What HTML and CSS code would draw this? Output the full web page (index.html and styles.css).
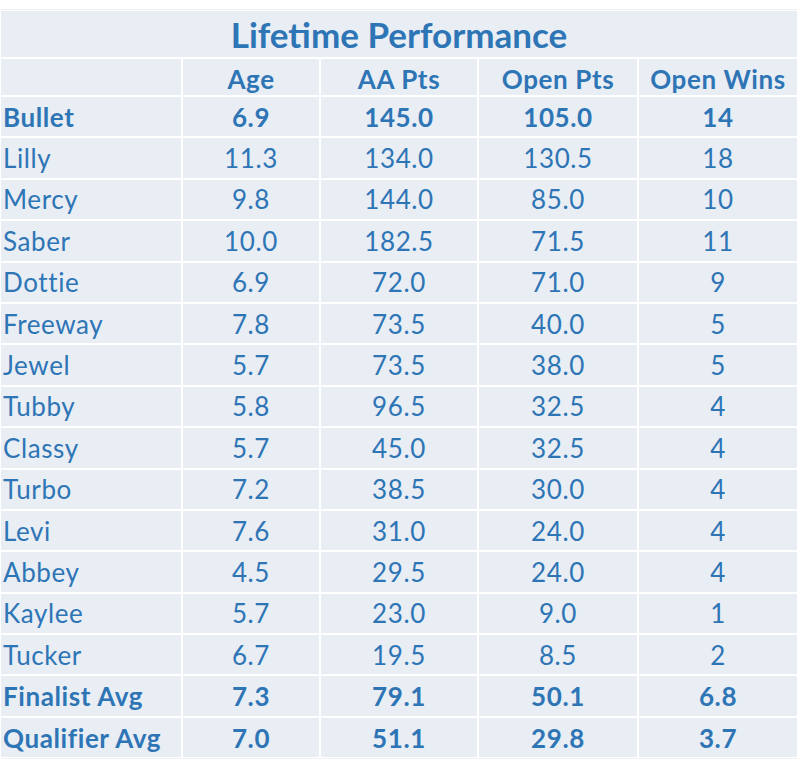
FILE: index.html
```html
<!DOCTYPE html>
<html>
<head>
<meta charset="utf-8">
<link rel="stylesheet" href="styles.css">
</head>
<body>
<div class="sheet">
  <div class="table">
    <div class="cell title">Lifetime Performance</div>
    <div class="cell head"></div>
    <div class="cell head">Age</div>
    <div class="cell head">AA Pts</div>
    <div class="cell head">Open Pts</div>
    <div class="cell head">Open Wins</div>

    <div class="cell name bold">Bullet</div><div class="cell bold">6.9</div><div class="cell bold">145.0</div><div class="cell bold">105.0</div><div class="cell bold">14</div>
    <div class="cell name">Lilly</div><div class="cell">11.3</div><div class="cell">134.0</div><div class="cell">130.5</div><div class="cell">18</div>
    <div class="cell name">Mercy</div><div class="cell">9.8</div><div class="cell">144.0</div><div class="cell">85.0</div><div class="cell">10</div>
    <div class="cell name">Saber</div><div class="cell">10.0</div><div class="cell">182.5</div><div class="cell">71.5</div><div class="cell">11</div>
    <div class="cell name">Dottie</div><div class="cell">6.9</div><div class="cell">72.0</div><div class="cell">71.0</div><div class="cell">9</div>
    <div class="cell name">Freeway</div><div class="cell">7.8</div><div class="cell">73.5</div><div class="cell">40.0</div><div class="cell">5</div>
    <div class="cell name">Jewel</div><div class="cell">5.7</div><div class="cell">73.5</div><div class="cell">38.0</div><div class="cell">5</div>
    <div class="cell name">Tubby</div><div class="cell">5.8</div><div class="cell">96.5</div><div class="cell">32.5</div><div class="cell">4</div>
    <div class="cell name">Classy</div><div class="cell">5.7</div><div class="cell">45.0</div><div class="cell">32.5</div><div class="cell">4</div>
    <div class="cell name">Turbo</div><div class="cell">7.2</div><div class="cell">38.5</div><div class="cell">30.0</div><div class="cell">4</div>
    <div class="cell name">Levi</div><div class="cell">7.6</div><div class="cell">31.0</div><div class="cell">24.0</div><div class="cell">4</div>
    <div class="cell name">Abbey</div><div class="cell">4.5</div><div class="cell">29.5</div><div class="cell">24.0</div><div class="cell">4</div>
    <div class="cell name">Kaylee</div><div class="cell">5.7</div><div class="cell">23.0</div><div class="cell">9.0</div><div class="cell">1</div>
    <div class="cell name">Tucker</div><div class="cell">6.7</div><div class="cell">19.5</div><div class="cell">8.5</div><div class="cell">2</div>
    <div class="cell name bold">Finalist Avg</div><div class="cell bold">7.3</div><div class="cell bold">79.1</div><div class="cell bold">50.1</div><div class="cell bold">6.8</div>
    <div class="cell name bold">Qualifier Avg</div><div class="cell bold">7.0</div><div class="cell bold">51.1</div><div class="cell bold">29.8</div><div class="cell bold">3.7</div>
  </div>
</div>
</body>
</html>
```

FILE: styles.css
```css
html, body {
  margin: 0;
  padding: 0;
  background: #ffffff;
}

.sheet {
  padding-top: 9px;
  padding-left: 0;
}

.table {
  display: grid;
  grid-template-columns: 180px 136px 156px 158px 158px;
  grid-template-rows: 46px 36px repeat(16, 39.4px);
  gap: 2px;
  width: 796px;
  margin-left: 1px;
  background: #ffffff;
  border-top: 1px solid #eeeeee;
  border-bottom: 1px solid #f2f2f2;
  padding: 1px 0;
  font-family: Lato, "Liberation Sans", sans-serif;
  color: #2e75b6;
}

.cell {
  background: #e9edf4;
  display: flex;
  align-items: center;
  justify-content: center;
  font-size: 26px;
  letter-spacing: 0.6px;
  font-weight: 400;
  line-height: 1;
  white-space: nowrap;
}

.title {
  grid-column: 1 / -1;
  font-size: 35px;
  letter-spacing: 0;
  font-weight: 700;
  padding-top: 1px;
}

.head {
  font-weight: 700;
  padding-top: 4px;
}

.name {
  justify-content: flex-start;
  padding-left: 2px;
}

.bold {
  font-weight: 700;
}
```
